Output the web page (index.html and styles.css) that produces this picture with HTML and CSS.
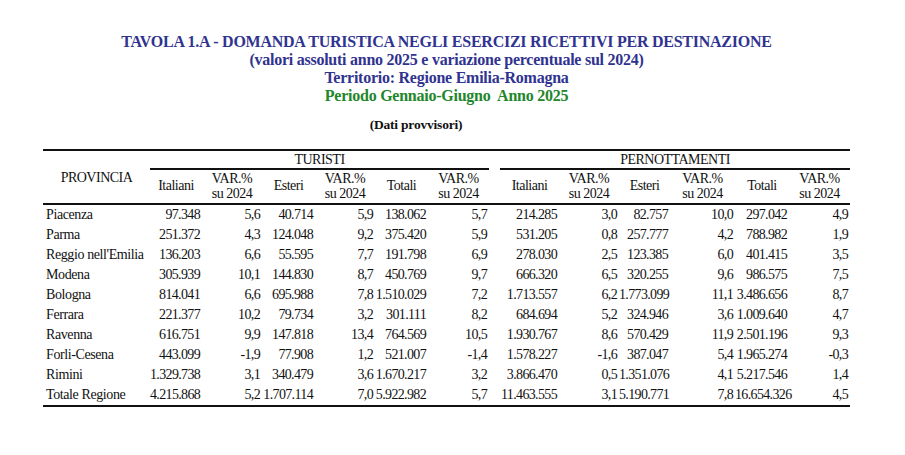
FILE: index.html
```html
<!DOCTYPE html>
<html lang="it">
<head>
<meta charset="utf-8">
<title>Tavola 1.A</title>
<link rel="stylesheet" href="styles.css">
</head>
<body>
<div class="page">
  <div class="titles">
    <div class="t-blue">TAVOLA 1.A - DOMANDA TURISTICA NEGLI ESERCIZI RICETTIVI PER DESTINAZIONE</div>
    <div class="t-blue">(valori assoluti anno 2025 e variazione percentuale sul 2024)</div>
    <div class="t-blue">Territorio: Regione Emilia-Romagna</div>
    <div class="t-green">Periodo Gennaio-Giugno&nbsp; Anno 2025</div>
    <div class="t-note">(Dati provvisori)</div>
  </div>
  <table class="data">
    <colgroup>
      <col class="c-prov">
      <col class="c52"><col class="c60"><col class="c53"><col class="c60"><col class="c53"><col class="c61">
      <col class="c-gap">
      <col class="c59"><col class="c60"><col class="c51"><col class="c65"><col class="c54"><col class="c61">
    </colgroup>
    <thead>
      <tr class="h1">
        <th rowspan="2" class="prov-h">PROVINCIA</th>
        <th colspan="6" class="group">TURISTI</th>
        <th rowspan="2" class="gap"></th>
        <th colspan="6" class="group">PERNOTTAMENTI</th>
      </tr>
      <tr class="h2">
        <th>Italiani</th><th>VAR.%<br>su 2024</th><th>Esteri</th><th>VAR.%<br>su 2024</th><th>Totali</th><th>VAR.%<br>su 2024</th>
        <th>Italiani</th><th>VAR.%<br>su 2024</th><th>Esteri</th><th>VAR.%<br>su 2024</th><th>Totali</th><th>VAR.%<br>su 2024</th>
      </tr>
    </thead>
    <tbody>
      <tr><td class="name">Piacenza</td><td>97.348</td><td>5,6</td><td>40.714</td><td>5,9</td><td>138.062</td><td>5,7</td><td class="gap"></td><td>214.285</td><td>3,0</td><td>82.757</td><td>10,0</td><td>297.042</td><td>4,9</td></tr>
      <tr><td class="name">Parma</td><td>251.372</td><td>4,3</td><td>124.048</td><td>9,2</td><td>375.420</td><td>5,9</td><td class="gap"></td><td>531.205</td><td>0,8</td><td>257.777</td><td>4,2</td><td>788.982</td><td>1,9</td></tr>
      <tr><td class="name">Reggio nell'Emilia</td><td>136.203</td><td>6,6</td><td>55.595</td><td>7,7</td><td>191.798</td><td>6,9</td><td class="gap"></td><td>278.030</td><td>2,5</td><td>123.385</td><td>6,0</td><td>401.415</td><td>3,5</td></tr>
      <tr><td class="name">Modena</td><td>305.939</td><td>10,1</td><td>144.830</td><td>8,7</td><td>450.769</td><td>9,7</td><td class="gap"></td><td>666.320</td><td>6,5</td><td>320.255</td><td>9,6</td><td>986.575</td><td>7,5</td></tr>
      <tr><td class="name">Bologna</td><td>814.041</td><td>6,6</td><td>695.988</td><td>7,8</td><td>1.510.029</td><td>7,2</td><td class="gap"></td><td>1.713.557</td><td>6,2</td><td>1.773.099</td><td>11,1</td><td>3.486.656</td><td>8,7</td></tr>
      <tr><td class="name">Ferrara</td><td>221.377</td><td>10,2</td><td>79.734</td><td>3,2</td><td>301.111</td><td>8,2</td><td class="gap"></td><td>684.694</td><td>5,2</td><td>324.946</td><td>3,6</td><td>1.009.640</td><td>4,7</td></tr>
      <tr><td class="name">Ravenna</td><td>616.751</td><td>9,9</td><td>147.818</td><td>13,4</td><td>764.569</td><td>10,5</td><td class="gap"></td><td>1.930.767</td><td>8,6</td><td>570.429</td><td>11,9</td><td>2.501.196</td><td>9,3</td></tr>
      <tr><td class="name">Forli-Cesena</td><td>443.099</td><td>-1,9</td><td>77.908</td><td>1,2</td><td>521.007</td><td>-1,4</td><td class="gap"></td><td>1.578.227</td><td>-1,6</td><td>387.047</td><td>5,4</td><td>1.965.274</td><td>-0,3</td></tr>
      <tr><td class="name">Rimini</td><td>1.329.738</td><td>3,1</td><td>340.479</td><td>3,6</td><td>1.670.217</td><td>3,2</td><td class="gap"></td><td>3.866.470</td><td>0,5</td><td>1.351.076</td><td>4,1</td><td>5.217.546</td><td>1,4</td></tr>
      <tr class="last"><td class="name">Totale Regione</td><td>4.215.868</td><td>5,2</td><td>1.707.114</td><td>7,0</td><td>5.922.982</td><td>5,7</td><td class="gap"></td><td>11.463.555</td><td>3,1</td><td>5.190.771</td><td>7,8</td><td>16.654.326</td><td>4,5</td></tr>
    </tbody>
  </table>
</div>
</body>
</html>
```
FILE: styles.css
```css
html, body {
  margin: 0;
  padding: 0;
  background: #ffffff;
}
body {
  font-family: "Liberation Serif", "Times New Roman", serif;
  color: #111;
}
.page {
  padding-top: 33px;
  padding-left: 43px;
}
.titles {
  width: 807px;
  text-align: center;
  font-weight: bold;
  font-size: 16px;
  letter-spacing: -0.25px;
  line-height: 18px;
}
.t-blue { color: #30338f; }
.t-green { color: #22862a; }
.t-note {
  color: #111;
  font-size: 13.5px;
  letter-spacing: -0.2px;
  line-height: 16px;
  margin-top: 12px;
  padding-right: 61px;
}
.data {
  margin-top: 16px;
  width: 807px;
  table-layout: fixed;
  border-collapse: separate;
  border-spacing: 0;
  font-size: 14px;
  letter-spacing: -0.5px;
}
.c-prov { width: 107px; }
.c-gap { width: 11px; }
.c51 { width: 51px; }
.c52 { width: 52px; }
.c53 { width: 53px; }
.c54 { width: 54px; }
.c59 { width: 59px; }
.c60 { width: 60px; }
.c61 { width: 61px; }
.c65 { width: 65px; }
.data th {
  font-weight: normal;
  padding: 0;
  text-align: center;
  vertical-align: middle;
  white-space: nowrap;
}
.h1 th {
  border-top: 2px solid #111;
  height: 17px;
  line-height: 17px;
}
.h1 .group {
  border-bottom: 2px solid #111;
}
.prov-h, .h1 .gap {
  border-bottom: 2px solid #111;
}
.h2 th {
  height: 33px;
  line-height: 14.5px;
  border-bottom: 2px solid #111;
}
.data td {
  padding: 0 2px 0 0;
  height: 20px;
  line-height: 20px;
  text-align: right;
  white-space: nowrap;
  letter-spacing: -0.65px;
}
.data td.name {
  text-align: left;
  padding: 0 0 0 3px;
  letter-spacing: -0.4px;
}
.data td.gap { padding: 0; }
.data tr.last td {
  height: 19px;
  line-height: 20px;
  border-bottom: 2px solid #111;
}
```
